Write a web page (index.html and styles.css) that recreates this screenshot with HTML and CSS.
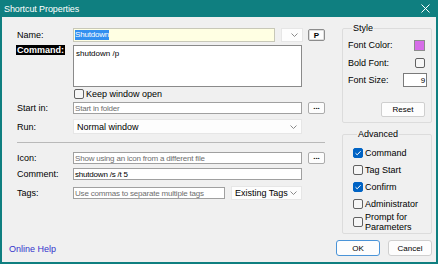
FILE: index.html
```html
<!DOCTYPE html>
<html lang="en">
<head>
    <meta charset="UTF-8">
    <meta name="viewport" content="width=device-width, initial-scale=1.0">
    <title>Shortcut Properties</title>
    <link rel="stylesheet" href="styles.css">
</head>
<body>
    <div class="window">
        <div class="titlebar">
            <span class="title">Shortcut Properties</span>
            <svg class="close" width="9" height="9" viewBox="0 0 9 9">
                <path d="M0.5 0.5 L8.5 8.5 M8.5 0.5 L0.5 8.5" stroke="#fff" stroke-width="1" fill="none"/>
            </svg>
        </div>
        <div class="client">
            <div class="main">
                <div class="form">
                    <div class="row row-name">
                        <span class="label">Name:</span>
                        <div class="field name-field"><span class="selected">Shutdown</span></div>
                        <div class="combo combo-small">
                            <svg width="7" height="4" viewBox="0 0 7 4"><path d="M0.5 0.5 L3.5 3.5 L6.5 0.5" stroke="#8a8a8a" fill="none"/></svg>
                        </div>
                        <div class="btn btn-p">P</div>
                    </div>
                    <div class="row row-command">
                        <span class="label"><span class="label-hi">Command:</span></span>
                        <div class="field textarea">shutdown /p</div>
                    </div>
                    <div class="row row-keep">
                        <span class="check"></span>
                        <span class="check-text">Keep window open</span>
                    </div>
                    <div class="row row-start">
                        <span class="label">Start in:</span>
                        <div class="field wide placeholder">Start in folder</div>
                        <div class="btn btn-dots">...</div>
                    </div>
                    <div class="row row-run">
                        <span class="label">Run:</span>
                        <div class="combo combo-run">
                            <span>Normal window</span>
                            <svg width="7" height="4" viewBox="0 0 7 4"><path d="M0.5 0.5 L3.5 3.5 L6.5 0.5" stroke="#8a8a8a" fill="none"/></svg>
                        </div>
                    </div>
                    <div class="separator"></div>
                    <div class="row row-icon">
                        <span class="label">Icon:</span>
                        <div class="field wide placeholder">Show using an icon from a different file</div>
                        <div class="btn btn-dots">...</div>
                    </div>
                    <div class="row row-comment">
                        <span class="label">Comment:</span>
                        <div class="field wide">shutdown /s /t 5</div>
                    </div>
                    <div class="row row-tags">
                        <span class="label">Tags:</span>
                        <div class="field tags-field placeholder">Use commas to separate multiple tags</div>
                        <div class="combo combo-tags">
                            <span>Existing Tags</span>
                            <svg width="7" height="4" viewBox="0 0 7 4"><path d="M0.5 0.5 L3.5 3.5 L6.5 0.5" stroke="#8a8a8a" fill="none"/></svg>
                        </div>
                    </div>
                </div>

                <div class="side">
                    <fieldset class="group group-style">
                        <legend>Style</legend>
                        <div class="opt opt-color">
                            <span>Font Color:</span>
                            <span class="swatch"></span>
                        </div>
                        <div class="opt opt-bold">
                            <span>Bold Font:</span>
                            <span class="check"></span>
                        </div>
                        <div class="opt opt-size">
                            <span>Font Size:</span>
                            <div class="field size-field">9</div>
                        </div>
                        <div class="opt opt-reset">
                            <div class="btn btn-reset">Reset</div>
                        </div>
                    </fieldset>

                    <fieldset class="group group-adv">
                        <legend>Advanced</legend>
                        <div class="adv adv-first">
                            <span class="check checked"><svg width="8" height="8" viewBox="0 0 8 8"><path d="M1.5 4.2 L3.2 5.8 L6.6 2.2" stroke="#fff" stroke-width="1" fill="none"/></svg></span>
                            <span>Command</span>
                        </div>
                        <div class="adv">
                            <span class="check"></span>
                            <span>Tag Start</span>
                        </div>
                        <div class="adv">
                            <span class="check checked"><svg width="8" height="8" viewBox="0 0 8 8"><path d="M1.5 4.2 L3.2 5.8 L6.6 2.2" stroke="#fff" stroke-width="1" fill="none"/></svg></span>
                            <span>Confirm</span>
                        </div>
                        <div class="adv">
                            <span class="check"></span>
                            <span>Administrator</span>
                        </div>
                        <div class="adv adv-prompt">
                            <span class="check"></span>
                            <span>Prompt for<br>Parameters</span>
                        </div>
                    </fieldset>
                </div>
            </div>

            <div class="footer">
                <span class="help">Online Help</span>
                <div class="footer-buttons">
                    <div class="btn btn-ok">OK</div>
                    <div class="btn btn-cancel">Cancel</div>
                </div>
            </div>
        </div>
    </div>
</body>
</html>
```

FILE: styles.css
```css
body {
    margin: 0;
    font-family: "Liberation Sans", Arial, sans-serif;
    font-size: 9px;
    color: #000;
}
.window {
    width: 438px;
    height: 264px;
    box-sizing: border-box;
    background: #0f7f80;
    padding: 0 2px 2px 2px;
    display: flex;
    flex-direction: column;
}
.titlebar {
    height: 17px;
    flex: none;
    display: flex;
    align-items: center;
    justify-content: space-between;
    padding: 0 6px 0 2px;
    color: #fff;
}
.title {
    font-size: 9px;
    letter-spacing: -0.1px;
}
.client {
    flex: 1;
    background: #f0f0f0;
    display: flex;
    flex-direction: column;
}
.main {
    display: flex;
    gap: 17px;
    padding: 6px 4px 0 15px;
}
.form {
    width: 308px;
    padding-top: 5px;
}
.row {
    display: flex;
    align-items: center;
}
.label {
    width: 56px;
    flex: none;
}
.label-hi {
    background: #000;
    color: #fff;
    font-weight: bold;
    padding: 0 1px;
    margin-left: -1px;
}
.field {
    box-sizing: border-box;
    height: 100%;
    background: #fff;
    border: 1px solid #a0a0a0;
    font-size: 8px;
    letter-spacing: -0.2px;
    padding-left: 1px;
    display: flex;
    align-items: center;
    white-space: nowrap;
    overflow: hidden;
}
.placeholder {
    color: #6e6e6e;
}
.wide {
    width: 229px;
}
.row-name {
    height: 14px;
}
.name-field {
    width: 202px;
    background: #ffffe3;
    border-color: #c8c8b8;
}
.selected {
    background: #3390f0;
    color: #fff;
    line-height: 10px;
}
.combo {
    box-sizing: border-box;
    height: 100%;
    background: #fdfdfd;
    border: 1px solid #e6e6e6;
    display: flex;
    align-items: center;
    justify-content: space-between;
    padding: 0 4px 0 3px;
}
.combo-small {
    width: 22px;
    margin-left: 6px;
    justify-content: flex-end;
}
.btn {
    box-sizing: border-box;
    background: #fdfdfd;
    border: 1px solid #cfcfcf;
    border-radius: 2px;
    display: flex;
    align-items: center;
    justify-content: center;
    font-size: 8px;
}
.btn-p {
    width: 17px;
    height: 12px;
    margin-left: 5px;
    border-color: #8c8c8c;
    box-shadow: inset 0 0 0 1px #dedede;
    font-weight: bold;
    font-size: 8px;
}
.row-command {
    margin-top: 3px;
    height: 42px;
    align-items: flex-start;
}
.row-command .label {
    line-height: 10px;
}
.textarea {
    width: 229px;
    align-items: flex-start;
    padding: 3px 0 0 2px;
    border-color: #8a8a8a;
    letter-spacing: 0;
}
.row-keep {
    margin-top: 2px;
    height: 10px;
    padding-left: 57px;
}
.check {
    box-sizing: border-box;
    width: 10px;
    height: 10px;
    flex: none;
    border: 1px solid #616161;
    border-radius: 2px;
    background: #f6f6f6;
    display: flex;
    align-items: center;
    justify-content: center;
}
.check.checked {
    background: #0063c4;
    border-color: #0063c4;
}
.check-text {
    margin-left: 2px;
}
.row-start {
    margin-top: 3px;
    height: 12px;
}
.btn-dots {
    width: 17px;
    height: 12px;
    margin-left: 6px;
    border-color: #ababab;
    font-weight: bold;
    padding-bottom: 3px;
}
.row-run {
    margin-top: 5px;
    height: 15px;
}
.combo-run {
    width: 229px;
    font-size: 9px;
}
.separator {
    margin-top: 8px;
    height: 1px;
    background: #b9b9b9;
}
.row-icon {
    margin-top: 9px;
    height: 12px;
}
.row-comment {
    margin-top: 4px;
    height: 12px;
}
.row-tags {
    margin-top: 6px;
    height: 14px;
}
.tags-field {
    width: 152px;
    height: 12px;
}
.combo-tags {
    width: 71px;
    margin-left: 6px;
    font-size: 9px;
}

.side {
    width: 90px;
}
.group {
    margin: 0;
    border: 1px solid #dcdcdc;
    border-radius: 2px;
    min-width: 0;
}
.group legend {
    padding: 0 1px;
    margin-left: 4px;
    line-height: 11px;
}
.group-style {
    padding: 5px 6px 5px 5px;
}
.opt {
    display: flex;
    align-items: center;
    justify-content: space-between;
    height: 12px;
}
.opt-bold {
    margin-top: 6px;
}
.opt-size {
    margin-top: 4px;
    height: 14px;
}
.swatch {
    box-sizing: border-box;
    width: 11px;
    height: 11px;
    background: #d66ce8;
    border: 1px solid #8c8c8c;
}
.size-field {
    width: 24px;
    margin-right: -2px;
    justify-content: flex-end;
    padding-right: 1px;
    border-color: #7a7a7a;
    font-size: 8px;
}
.opt-reset {
    margin-top: 15px;
    height: 15px;
    justify-content: flex-end;
}
.btn-reset {
    width: 44px;
    height: 15px;
}
.group-adv {
    margin-top: 6px;
    padding: 7px 4px 1px 10px;
}
.adv {
    display: flex;
    align-items: center;
    gap: 2px;
    height: 12px;
    margin-top: 5px;
}
.adv-first {
    margin-top: 0;
}
.adv-prompt {
    margin-top: 2px;
    height: 20px;
    line-height: 10px;
}

.footer {
    display: flex;
    align-items: center;
    justify-content: space-between;
    padding: 0 4px 0 7px;
    margin-top: 6px;
    height: 16px;
}
.help {
    color: #3434cc;
    margin-top: 2px;
}
.footer-buttons {
    display: flex;
    gap: 8px;
}
.btn-ok, .btn-cancel {
    width: 44px;
    height: 16px;
    border-radius: 3px;
}
.btn-ok {
    border-color: #4a94d8;
}
```
